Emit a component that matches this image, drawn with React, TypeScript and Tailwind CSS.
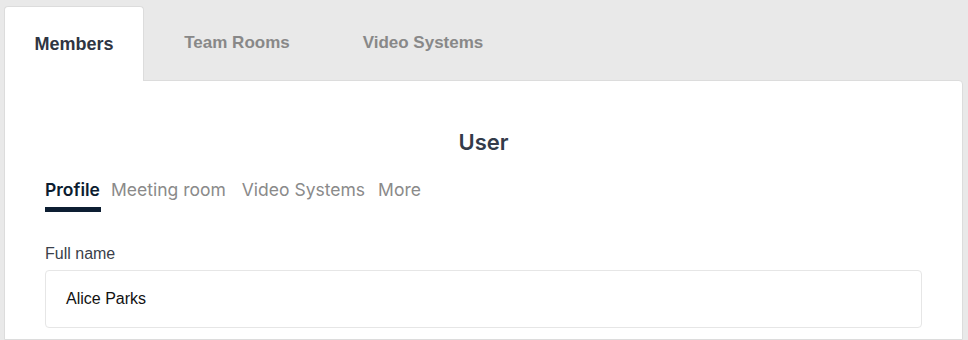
import React from "react";

export default function App() {
  return (
    <div className="h-[340px] overflow-hidden bg-[#e9e9e9] pl-[4px] pr-[5px] pt-[6px] flex flex-col">
      <div className="flex h-[74px] shrink-0 font-['Liberation_Sans',Arial,sans-serif] font-bold">
        <div className="relative z-10 -mb-px flex w-[140px] items-center justify-center rounded-t-[4px] border border-b-0 border-[#dcdcdc] bg-white text-[18px] text-[#2f3542]">
          Members
        </div>
        <div className="flex w-[186px] items-center justify-center text-[17px] text-[#888888]">Team Rooms</div>
        <div className="flex w-[186px] items-center justify-center text-[17px] text-[#888888]">Video Systems</div>
      </div>
      <div className="flex-1 rounded-tr-[4px] border border-[#dcdcdc] bg-white px-[40px]">
        <h1 className="mt-[47px] text-center font-['Inter',sans-serif] text-[22px] font-semibold leading-[28px] text-[#333b4a]">
          User
        </h1>
        <div className="mt-[22px] flex font-['Inter',sans-serif] text-[17.5px] leading-[24px]">
          <div className="flex flex-col">
            <span className="font-semibold text-[#0c1c30]">Profile</span>
            <span className="mt-[5px] h-[5px] w-[56px] bg-[#0d1e32]" />
          </div>
          <span className="ml-[10px] text-[#8a8a8a]">Meeting room</span>
          <span className="ml-[16px] text-[#8a8a8a]">Video Systems</span>
          <span className="ml-[13px] text-[#8a8a8a]">More</span>
        </div>
        <div className="mt-[32px] font-['Liberation_Sans',Arial,sans-serif]">
          <div className="text-[16px] leading-[20px] text-[#3a3f4a]">Full name</div>
          <div className="mt-[6px] flex h-[58px] items-center rounded-[4px] border border-[#e6e6e6] px-[20px] text-[16px] text-[#111111]">
            Alice Parks
          </div>
        </div>
      </div>
    </div>
  );
}
